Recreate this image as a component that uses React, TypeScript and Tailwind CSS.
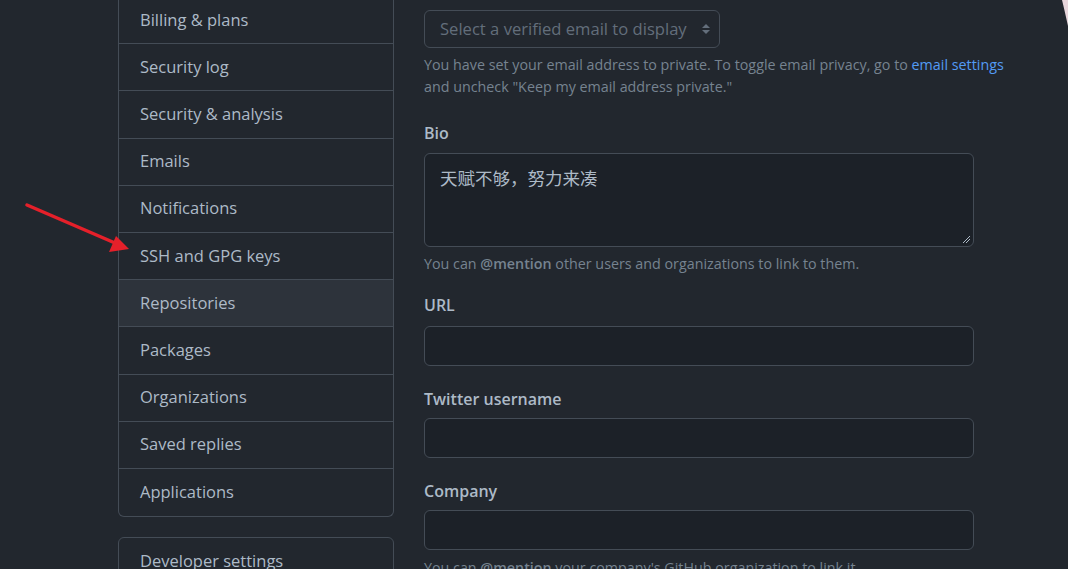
import React from "react";

const items = [
  "Billing & plans",
  "Security log",
  "Security & analysis",
  "Emails",
  "Notifications",
  "SSH and GPG keys",
  "Repositories",
  "Packages",
  "Organizations",
  "Saved replies",
  "Applications",
];

const font = { fontFamily: '"Open Sans", "Noto Sans CJK SC", sans-serif' };

export default function App() {
  return (
    <div
      className="relative w-[1068px] h-[569px] overflow-hidden bg-[#22272e] text-[#adbac7] flex"
      style={font}
    >
      {/* Sidebar */}
      <div className="ml-[118px] w-[276px] shrink-0 -mt-[3px]">
        <div className="border border-t-0 border-[#444c56] rounded-b-[6px]">
          {items.map((it, i) => (
            <div
              key={it}
              className={`h-[47.2px] flex items-center pl-[21px] text-[16.5px] ${
                i < items.length - 1 ? "border-b border-[#444c56]" : ""
              } ${it === "Repositories" ? "bg-[#2d333b]" : ""}`}
            >
              {it}
            </div>
          ))}
        </div>
        <div className="mt-[20px] border border-[#444c56] rounded-[6px] h-[60px] pl-[21px] pt-[11px] text-[16.5px]">
          Developer settings
        </div>
      </div>

      {/* Main */}
      <div className="ml-[30px] w-[550px] shrink-0 pt-[10px]">
        <div className="w-[296px] h-[38px] rounded-[6px] border border-[#444c56] bg-[#22272e] flex items-center pl-[15px] pr-[8px] text-[16.6px] text-[#636e7b]">
          <span className="flex-1 whitespace-nowrap">Select a verified email to display</span>
          <svg width="10" height="16" viewBox="0 0 10 16" className="ml-1">
            <path d="M5 3 L9 7 H1 Z" fill="#636e7b" />
            <path d="M5 13 L9 9 H1 Z" fill="#636e7b" />
          </svg>
        </div>
        <p className="mt-[6px] text-[14.3px] leading-[22px] text-[#768390] whitespace-nowrap">
          You have set your email address to private. To toggle email privacy, go to{" "}
          <span className="text-[#539bf5]">email settings</span>
          <br />
          and uncheck "Keep my email address private."
        </p>

        <div className="mt-[24px] text-[16px] font-semibold leading-[22px]">Bio</div>
        <div className="relative mt-[9px] h-[94px] rounded-[6px] border border-[#444c56] bg-[#1c2128] px-[15px] pt-[11px] text-[17.5px]">
          天赋不够，努力来凑
          <svg className="absolute right-[2px] bottom-[2px]" width="9" height="9" viewBox="0 0 9 9">
            <path d="M1 8 L8 1 M4 8 L8 4" stroke="#adbac7" strokeWidth="1" />
          </svg>
        </div>
        <p className="mt-[6px] text-[14.3px] leading-[22px] text-[#768390] whitespace-nowrap">
          You can <b className="font-semibold">@mention</b> other users and organizations to link to them.
        </p>

        <div className="mt-[19px] text-[16px] font-semibold leading-[22px]">URL</div>
        <div className="mt-[10px] h-[40px] rounded-[6px] border border-[#444c56] bg-[#1c2128]" />

        <div className="mt-[22px] text-[16px] font-semibold leading-[22px]">Twitter username</div>
        <div className="mt-[8px] h-[40px] rounded-[6px] border border-[#444c56] bg-[#1c2128]" />

        <div className="mt-[22px] text-[16px] font-semibold leading-[22px]">Company</div>
        <div className="mt-[8px] h-[40px] rounded-[6px] border border-[#444c56] bg-[#1c2128]" />
        <p className="mt-[7px] text-[14.3px] leading-[22px] text-[#768390] whitespace-nowrap">
          You can <b className="font-semibold">@mention</b> your company's GitHub organization to link it.
        </p>
      </div>

      {/* Red arrow annotation */}
      <svg className="absolute left-0 top-0 pointer-events-none" width="200" height="300">
        <line x1="27" y1="205" x2="115" y2="243" stroke="#e5202a" strokeWidth="3.5" strokeLinecap="round" />
        <polygon points="129,249 109,252 116,236" fill="#e5202a" />
      </svg>

      {/* corner fragment */}
      <svg className="absolute right-0 top-0" width="10" height="30">
        <path d="M10 0 L4 0 Q6 8 10 26 Z" fill="#e8d6dc" />
      </svg>
    </div>
  );
}
